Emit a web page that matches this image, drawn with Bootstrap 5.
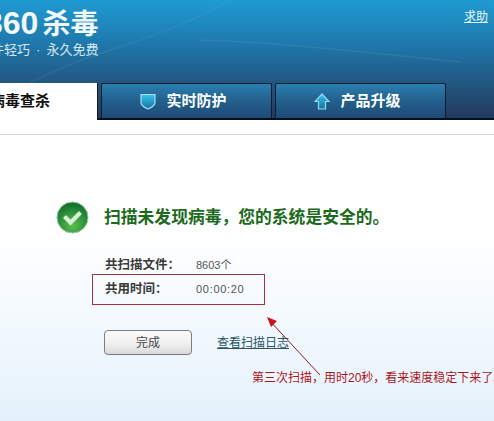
<!DOCTYPE html>
<html lang="zh-CN">
<head>
    <meta charset="UTF-8">
    <meta name="viewport" content="width=device-width, initial-scale=1.0">
    <title>360杀毒</title>
    <link href="https://cdn.jsdelivr.net/npm/bootstrap@5.3.0/dist/css/bootstrap.min.css" rel="stylesheet">
    <style>
        html, body {
            height: 421px;
            overflow: hidden;
        }
        body {
            font-family: "Liberation Sans", "Noto Sans CJK SC", sans-serif;
            font-size: 12px;
            position: relative;
            background: #fff;
        }
        .top-banner {
            height: 120px;
            position: relative;
            overflow: hidden;
            background: linear-gradient(180deg, #1f9bd2 0%, #1f79ad 35%, #22567f 70%, #24375c 100%);
        }
        .banner-swoosh {
            position: absolute;
            left: 0;
            top: 0;
        }
        .logo-block {
            position: relative;
            margin-left: -15px;
            padding-top: 6px;
            color: #fff;
            width: 125px;
        }
        .logo-name {
            font-size: 32px;
            font-weight: 700;
            line-height: 34px;
            white-space: nowrap;
            color: #f2f8fb;
        }
        .logo-name span {
            font-size: 28px;
            margin-left: 4px;
        }
        .logo-slogan {
            font-size: 13px;
            line-height: 16px;
            white-space: nowrap;
            word-spacing: 2.500px;
            color: #d5e8f2;
            margin-left: -7px;
        }
        .help-link {
            position: absolute;
            right: 6px;
            top: 8px;
            color: #e8f6fc;
            font-size: 12px;
        }
        .tab-row {
            position: absolute;
            left: 0;
            right: 0;
            bottom: 0;
            height: 37px;
            border-bottom: 2px solid #06101c;
        }
        .tab-item {
            height: 35px;
            font-size: 15px;
            font-weight: 700;
            color: #fff;
            border: 1px solid #0c1c30;
            border-bottom: 0;
            border-radius: 2px 2px 0 0;
            background: linear-gradient(180deg, #2a7fb0 0%, #23628f 45%, #1f4a76 100%);
        }
        .tab-current {
            width: 98px;
            height: 37px;
            color: #111;
            background: #fff;
            border: 0;
            border-right: 1px solid #0c1c30;
            border-radius: 0;
            margin-right: 3px;
            justify-content: flex-end;
            padding-right: 47px;
            white-space: nowrap;
        }
        .tab-wide {
            width: 171px;
            margin-right: 3px;
            gap: 10px;
            padding-right: 6px;
        }
        .tab-strip {
            height: 15px;
            background: #fff;
            border-bottom: 1px solid #d9d9d9;
        }
        .result-pane {
            height: 286px;
            padding: 66px 0 0 56px;
            background: linear-gradient(180deg, #fff 0%, #fff 35%, #eff7fd 75%, #e4f1fb 100%);
        }
        .result-title {
            font-size: 16.800px;
            font-weight: 700;
            color: #1c6a1c;
            white-space: nowrap;
            gap: 15px;
            line-height: 32px;
        }
        .stat-list {
            margin: 19px 0 0 49px;
        }
        .stat-line {
            height: 24px;
            align-items: center;
        }
        .stat-key {
            width: 91px;
            font-weight: 700;
            font-size: 12.500px;
            color: #3a3a3a;
        }
        .stat-value {
            color: #555;
            font-size: 11px;
        }
        .stat-time {
            letter-spacing: .7px;
        }
        .action-line {
            margin: 29px 0 0 48px;
            gap: 25px;
        }
        .btn-done {
            width: 88px;
            height: 25px;
            padding: 0;
            font-size: 12px;
            color: #444;
            border: 1px solid #7d7d7d;
            border-radius: 4px;
            background: linear-gradient(180deg, #fbfbfb 0%, #eeeeee 60%, #d9d9d9 100%);
        }
        .log-link {
            color: #2b5566;
        }
        .note-box {
            position: absolute;
            left: 92px;
            top: 274px;
            width: 173px;
            height: 31px;
            border: 1px solid #a5343f;
        }
        .note-arrow {
            position: absolute;
            left: 260px;
            top: 312px;
        }
        .note-text {
            position: absolute;
            left: 252px;
            top: 370px;
            color: #a8141c;
            font-size: 12px;
            line-height: 16px;
            white-space: nowrap;
            text-shadow: 0 0 3px #fff;
        }
    </style>
</head>
<body>
    <div class="top-banner">
        <svg class="banner-swoosh" width="494" height="120" viewBox="0 0 494 120">
            <path d="M30 83C90 50 150 45 230 0" fill="none" stroke="#5ab4dc" stroke-opacity=".14" stroke-width="1.500"/>
            <path d="M200 40C280 42 360 52 460 62" fill="none" stroke="#7cc6e6" stroke-opacity=".12" stroke-width="1.500"/>
        </svg>
        <div class="logo-block">
            <div class="logo-name">360<span>杀毒</span></div>
            <div class="logo-slogan">软件轻巧 · 永久免费</div>
        </div>
        <a class="help-link" href="#">求助</a>
        <div class="tab-row d-flex">
            <div class="tab-item tab-current d-flex align-items-center">病毒查杀</div>
            <div class="tab-item tab-wide d-flex align-items-center justify-content-center">
                <svg width="16" height="17" viewBox="0 0 16 17">
                    <defs>
                        <linearGradient id="iconFill" x1="0" y1="0" x2="0" y2="1">
                            <stop offset="0" stop-color="#37c4ec"/>
                            <stop offset="1" stop-color="#15719f"/>
                        </linearGradient>
                    </defs>
                    <path d="M1 1.500h14v8c0 3-3.500 5-7 6.500-3.500-1.500-7-3.500-7-6.500z" fill="url(#iconFill)" stroke="#a8dff5" stroke-width="1.200"/>
                </svg>
                <span>实时防护</span>
            </div>
            <div class="tab-item tab-wide d-flex align-items-center justify-content-center">
                <svg width="16" height="17" viewBox="0 0 16 17">
                    <path d="M8 1l7 7.500h-3.500V16h-7V8.500H1z" fill="url(#iconFill)" stroke="#8fdcf5" stroke-width="1.200"/>
                </svg>
                <span>产品升级</span>
            </div>
        </div>
    </div>
    <div class="tab-strip"></div>
    <div class="result-pane">
        <div class="result-title d-flex align-items-center">
            <svg width="33" height="33" viewBox="0 0 33 33">
                <defs>
                    <radialGradient id="okBall" cx=".5" cy=".75" r=".75">
                        <stop offset="0" stop-color="#5cc04e"/>
                        <stop offset="1" stop-color="#0b6b2a"/>
                    </radialGradient>
                </defs>
                <circle cx="16.500" cy="16.500" r="15.500" fill="url(#okBall)" stroke="#9ac4a6"/>
                <path d="M8.500 15.500l6 6 10-10" fill="none" stroke="#d8f0d6" stroke-width="4.200"/>
            </svg>
            <span>扫描未发现病毒，您的系统是安全的。</span>
        </div>
        <div class="stat-list">
            <div class="stat-line d-flex">
                <span class="stat-key">共扫描文件：</span>
                <span class="stat-value">8603个</span>
            </div>
            <div class="stat-line d-flex">
                <span class="stat-key">共用时间：</span>
                <span class="stat-value stat-time">00:00:20</span>
            </div>
        </div>
        <div class="action-line d-flex align-items-center">
            <button class="btn btn-done" type="button">完成</button>
            <a class="log-link" href="#">查看扫描日志</a>
        </div>
    </div>
    <div class="note-box"></div>
    <svg class="note-arrow" width="64" height="68" viewBox="0 0 64 68">
        <path d="M9 8L60 63" fill="none" stroke="#8a1c24"/>
        <path d="M7 5l10 4-6 6z" fill="#c4141c"/>
    </svg>
    <div class="note-text">第三次扫描，用时20秒，看来速度稳定下来了。</div>
    <script src="https://cdn.jsdelivr.net/npm/bootstrap@5.3.0/dist/js/bootstrap.bundle.min.js"></script>
</body>
</html>
